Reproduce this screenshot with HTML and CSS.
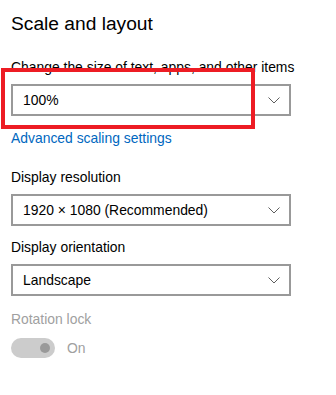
FILE: index.html
```html
<!DOCTYPE html>
<html>
<head>
<meta charset="utf-8">
<link rel="stylesheet" href="styles.css">
</head>
<body>
<div class="page">
  <h1 class="title">Scale and layout</h1>
  <div class="label first">Change the size of text, apps, and other items</div>
  <div class="select">
    <span class="value">100%</span>
    <svg class="chev" width="12" height="7" viewBox="0 0 12 7"><path d="M0.5 0.5 L6 6 L11.5 0.5" fill="none" stroke="#5f5f5f" stroke-width="1"/></svg>
  </div>
  <a class="link" href="#">Advanced scaling settings</a>
  <div class="label after-link">Display resolution</div>
  <div class="select">
    <span class="value">1920 × 1080 (Recommended)</span>
    <svg class="chev" width="12" height="7" viewBox="0 0 12 7"><path d="M0.5 0.5 L6 6 L11.5 0.5" fill="none" stroke="#5f5f5f" stroke-width="1"/></svg>
  </div>
  <div class="label after-select">Display orientation</div>
  <div class="select">
    <span class="value">Landscape</span>
    <svg class="chev" width="12" height="7" viewBox="0 0 12 7"><path d="M0.5 0.5 L6 6 L11.5 0.5" fill="none" stroke="#5f5f5f" stroke-width="1"/></svg>
  </div>
  <div class="label disabled rot">Rotation lock</div>
  <div class="toggle-row">
    <span class="toggle"><span class="knob"></span></span>
    <span class="toggle-text">On</span>
  </div>
  <div class="annot"></div>
</div>
</body>
</html>
```
FILE: styles.css
```css
html, body {
  margin: 0;
  padding: 0;
  background: #fff;
}
.page {
  position: relative;
  padding: 10px 0 0 11px;
  font-family: "Segoe UI", "Liberation Sans", Arial, sans-serif;
  color: #000;
  width: 325px;
  height: 385px;
}
.title {
  margin: 0;
  font-size: 19.2px;
  line-height: 28px;
  font-weight: 400;
}
.label {
  font-size: 13.9px;
  line-height: 20px;
}
.label.first { margin-top: 19px; }
.label.after-link { margin-top: 19px; }
.label.after-select { margin-top: 11px; }
.label.rot { margin-top: 13px; }
.label.disabled { color: #a0a0a0; }
.select {
  box-sizing: border-box;
  margin-top: 7px;
  width: 280px;
  height: 32px;
  border: 2px solid #999;
  display: flex;
  align-items: center;
  justify-content: space-between;
  padding: 0 9px 0 10px;
  font-size: 13.9px;
  line-height: 28px;
}
.link {
  display: block;
  margin-top: 12px;
  font-size: 13.9px;
  line-height: 20px;
  color: #0067c0;
  text-decoration: none;
}
.toggle-row {
  margin-top: 9px;
  display: flex;
  align-items: center;
  gap: 12px;
}
.toggle {
  width: 44px;
  height: 20px;
  border-radius: 10px;
  background: #cccccc;
  display: flex;
  align-items: center;
  justify-content: flex-end;
  padding-right: 5px;
  box-sizing: border-box;
}
.knob {
  width: 10px;
  height: 10px;
  border-radius: 50%;
  background: #999;
}
.toggle-text {
  font-size: 13.9px;
  line-height: 20px;
  color: #a0a0a0;
}
.annot {
  position: absolute;
  left: 1px;
  top: 68px;
  width: 254px;
  height: 61px;
  box-sizing: border-box;
  border: 4px solid #ed1c24;
}
```
